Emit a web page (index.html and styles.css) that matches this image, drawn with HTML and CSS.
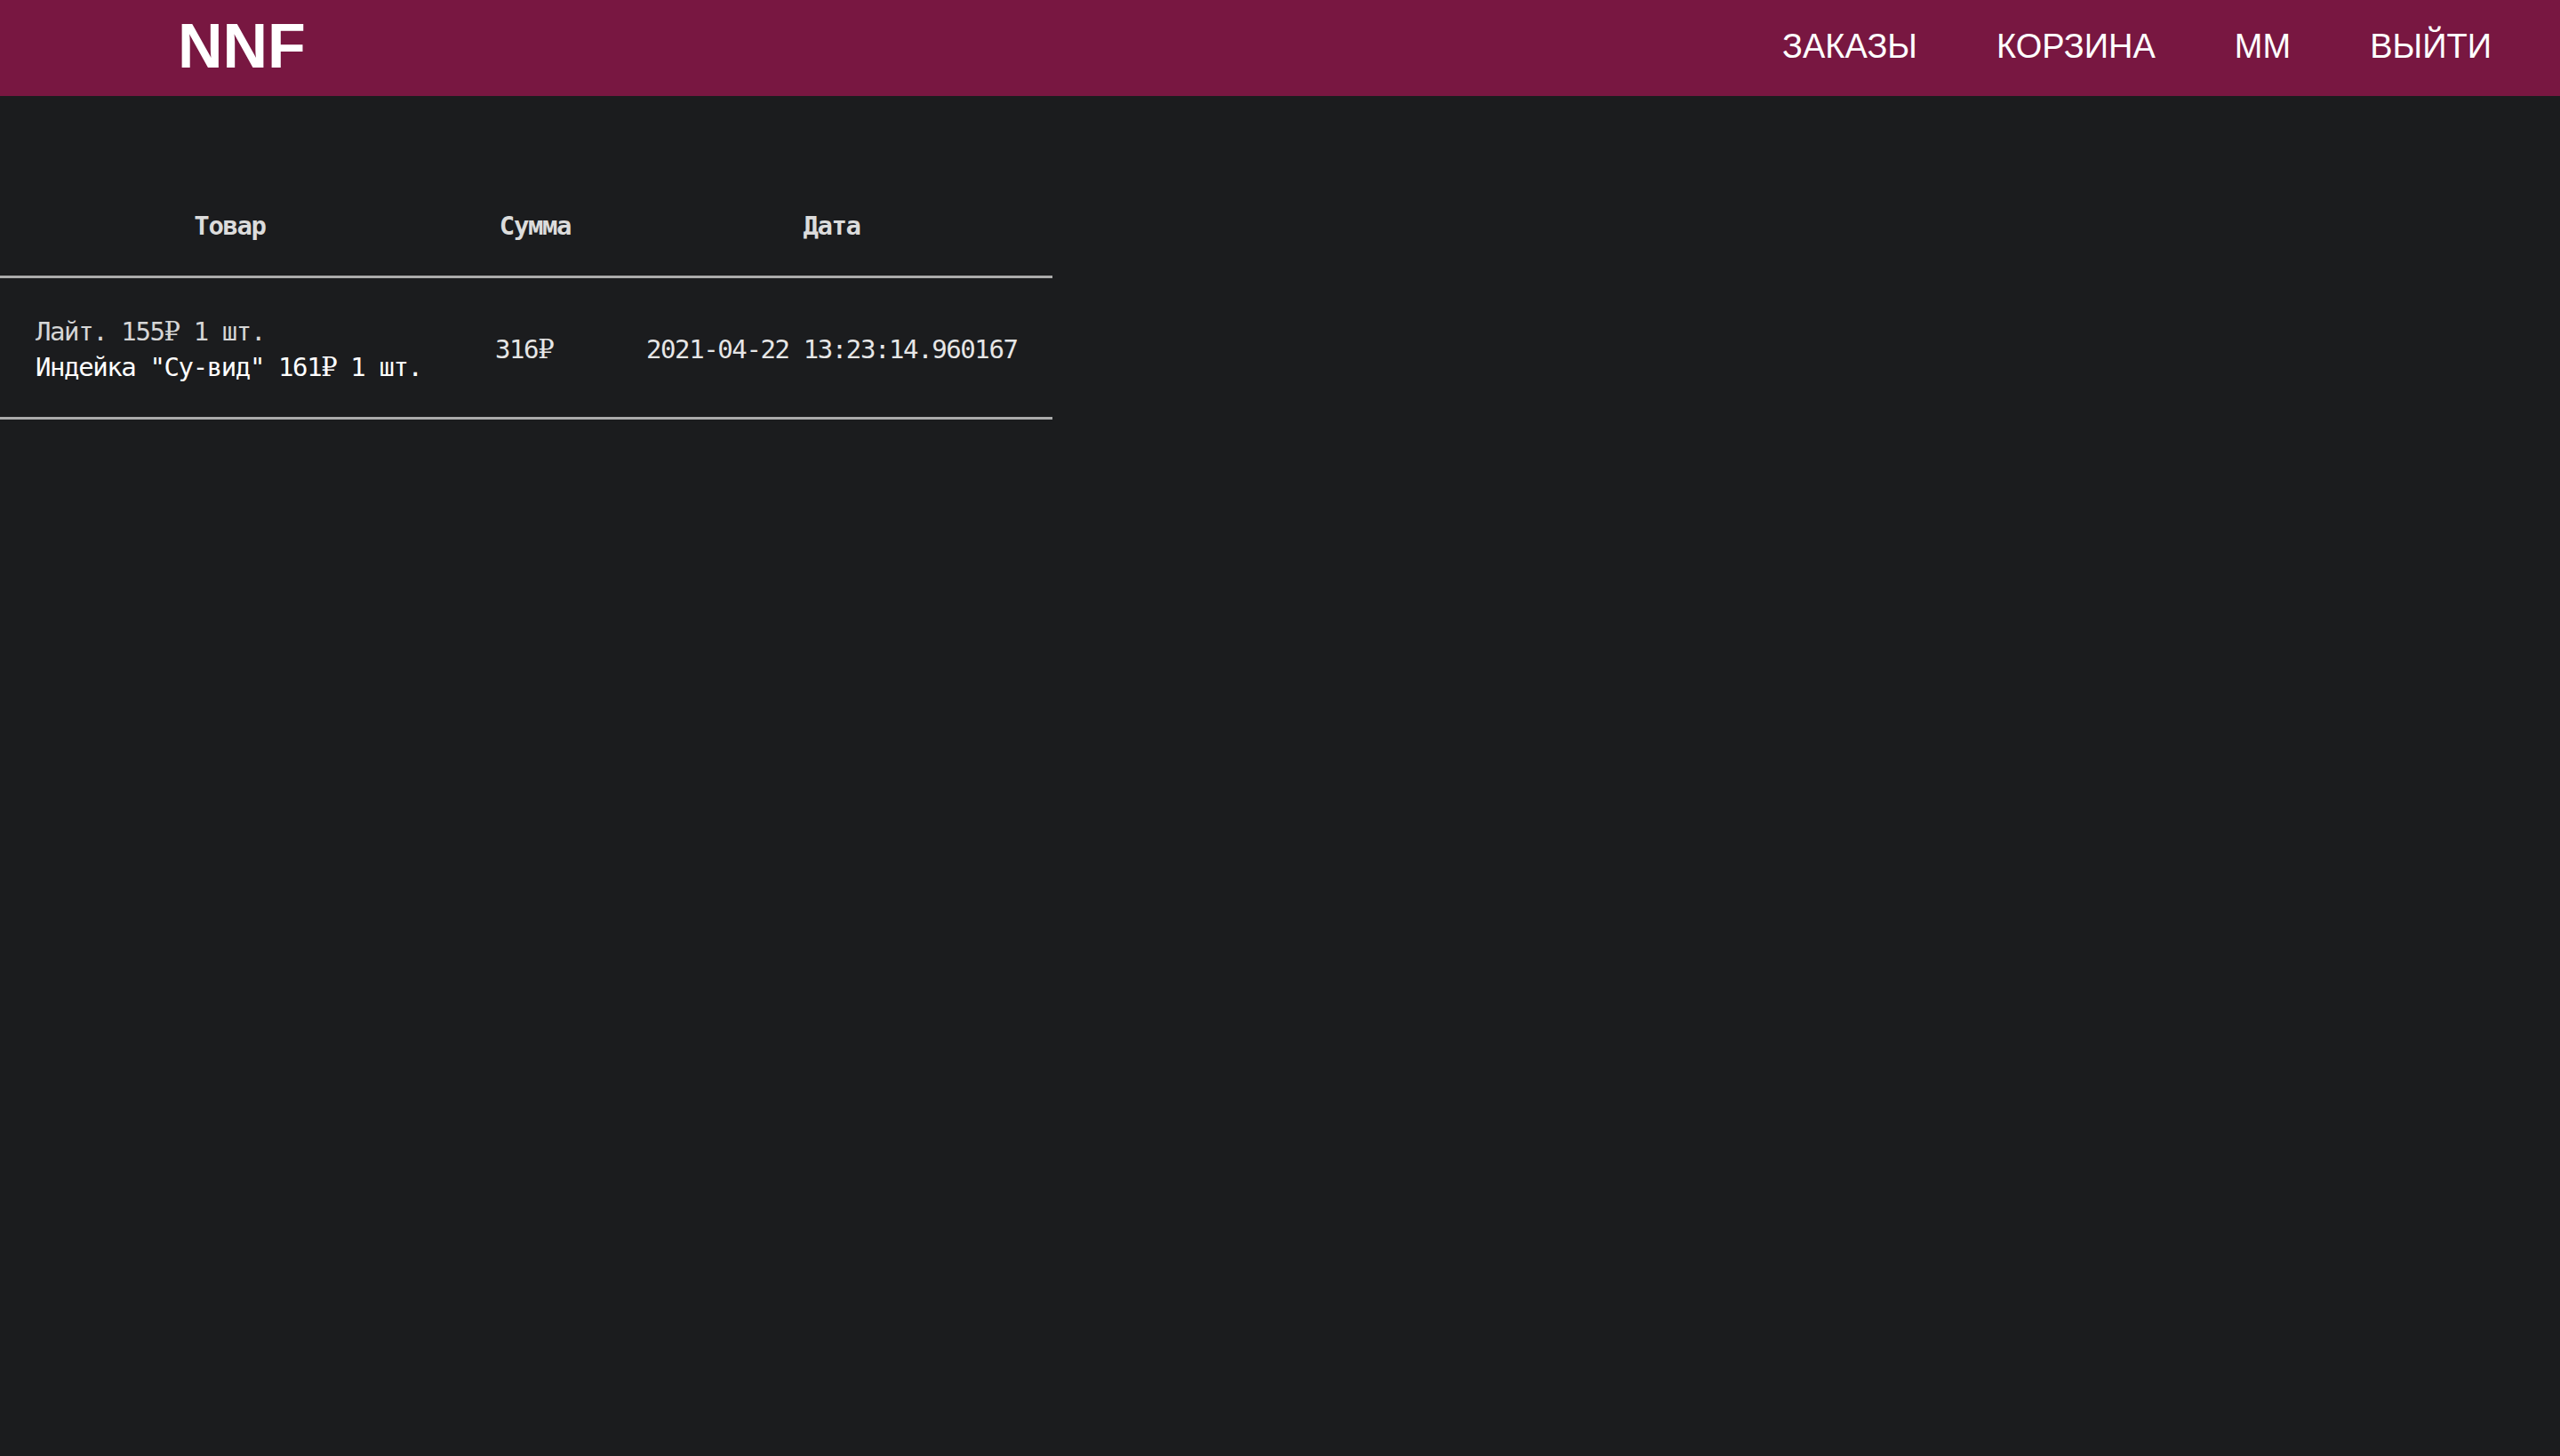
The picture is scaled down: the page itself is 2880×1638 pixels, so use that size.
FILE: index.html
```html
<!DOCTYPE html>
<html lang="ru">
<head>
<meta charset="utf-8">
<title>NNF — Заказы</title>
<link rel="stylesheet" href="styles.css">
</head>
<body>
<header class="topbar">
  <a class="logo" href="#">NNF</a>
  <nav class="nav">
    <a class="nav-link" href="#">ЗАКАЗЫ</a>
    <a class="nav-link" href="#">КОРЗИНА</a>
    <a class="nav-link" href="#">ММ</a>
    <a class="nav-link" href="#">ВЫЙТИ</a>
  </nav>
</header>
<main class="content">
  <table class="orders">
    <thead>
      <tr>
        <th class="col-item">Товар</th>
        <th class="col-sum">Сумма</th>
        <th class="col-date">Дата</th>
      </tr>
    </thead>
    <tbody>
      <tr>
        <td class="col-item">
          <div class="item item-dim">Лайт. 155<span class="rub">₽</span> 1 шт.</div>
          <div class="item">Индейка "Су-вид" 161<span class="rub">₽</span> 1 шт.</div>
        </td>
        <td class="col-sum">316<span class="rub">₽</span></td>
        <td class="col-date">2021-04-22 13:23:14.960167</td>
      </tr>
    </tbody>
  </table>
</main>
</body>
</html>
```
FILE: styles.css
```css
html, body {
  margin: 0;
  padding: 0;
}
body {
  background: #1b1c1e;
  min-height: 1638px;
  font-family: "DejaVu Sans Mono", "Liberation Mono", monospace;
  color: #e4e4e4;
}
.topbar {
  height: 108px;
  background: #781741;
  display: flex;
  align-items: center;
  justify-content: space-between;
  padding: 0 77px 4px 200px;
  box-sizing: border-box;
}
.logo {
  font-family: "Liberation Sans", Arial, sans-serif;
  font-weight: 700;
  font-size: 70px;
  line-height: 1;
  color: #ffffff;
  text-decoration: none;
}
.nav {
  display: flex;
  gap: 89px;
}
.nav-link {
  font-family: "Liberation Sans", Arial, sans-serif;
  font-size: 38px;
  line-height: 1;
  color: #ffffff;
  text-decoration: none;
}
.content {
  padding-top: 86px;
}
.orders {
  border-collapse: collapse;
  table-layout: fixed;
  width: 1183px;
  font-size: 29px;
  letter-spacing: -1.4px;
  line-height: 40px;
}
.orders th {
  font-weight: 700;
  color: #dcdcdc;
  text-align: center;
  padding: 40px 40px 36px;
  border-bottom: 3px solid #ababab;
}
.orders td {
  text-align: left;
  vertical-align: middle;
  padding: 40px 40px 36px;
  border-bottom: 3px solid #ababab;
  white-space: nowrap;
  color: #e6e6e6;
}
.col-item { width: 437px; }
.col-sum { width: 90px; }
.col-date { width: 417px; }
.item { color: #ffffff; }
.item-dim { color: #d6d6d6; }
.rub {
  font-family: "DejaVu Serif", "Liberation Serif", serif;
}
```
